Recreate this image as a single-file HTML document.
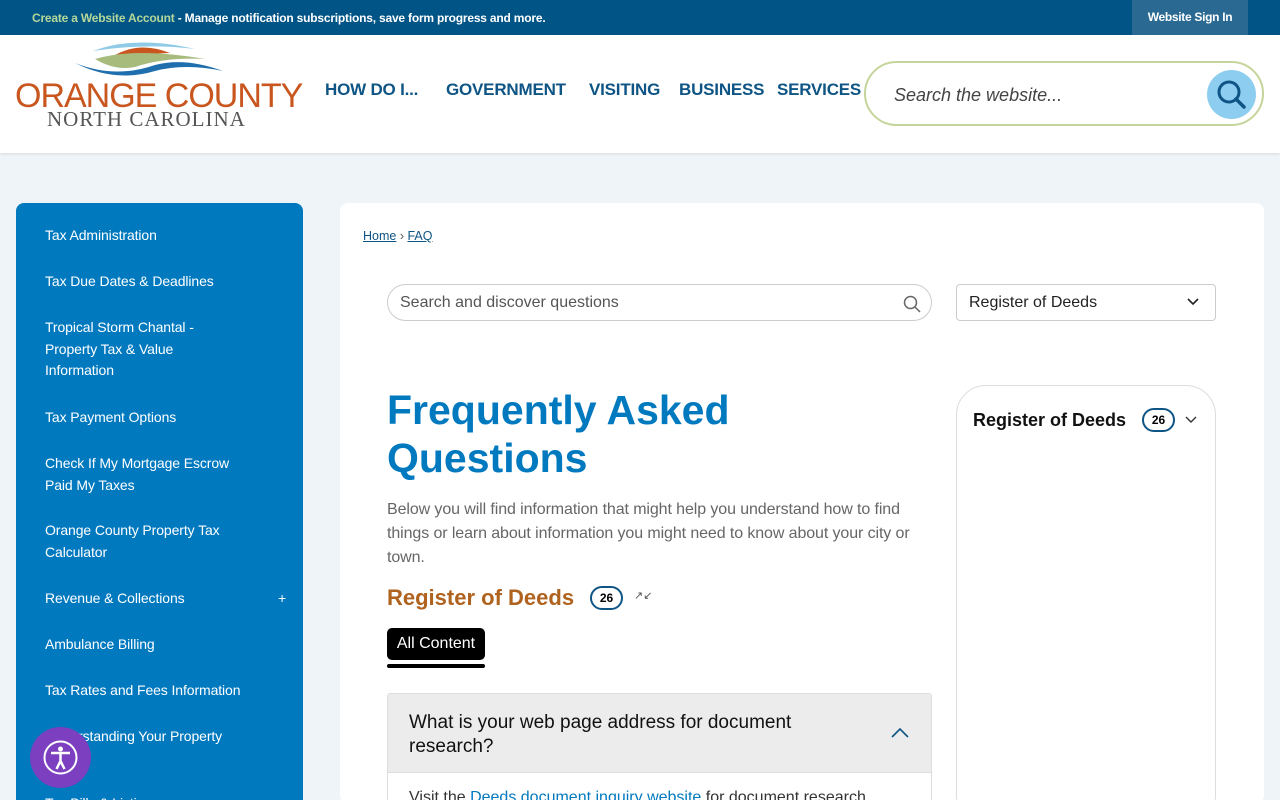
<!DOCTYPE html>
<html><head><meta charset="utf-8"><style>
*{box-sizing:border-box;margin:0;padding:0}
html,body{width:1280px;height:800px;overflow:hidden}
body{background:#eef4f7;font-family:"Liberation Sans",sans-serif;position:relative}
.top{position:absolute;left:0;top:0;width:1280px;height:35px;background:#005586;color:#fff;font-size:12px;font-weight:bold}
.top .msg{position:absolute;left:32px;top:11px;letter-spacing:-0.2px}
.top .msg b{color:#b5d89a}
.top .sign{position:absolute;left:1132px;top:0;width:116px;height:35px;background:#2a6a92;text-align:center;line-height:35px;letter-spacing:-0.3px}
.head{position:absolute;left:0;top:35px;width:1280px;height:118px;background:#fff;box-shadow:0 1px 3px rgba(0,0,0,.1)}
.nav{position:absolute;top:80px;font-size:17px;font-weight:bold;color:#0e5585;letter-spacing:-0.2px}
.search{position:absolute;left:864px;top:61px;width:400px;height:65px;border:2px solid #c4d49a;border-radius:33px;background:#fff}
.search span{position:absolute;left:28px;top:22px;font-style:italic;font-size:18px;color:#444}
.search .btn{position:absolute;left:341px;top:7px;width:49px;height:49px;border-radius:50%;background:#8dcdf0}
.side{position:absolute;left:16px;top:203px;width:287px;height:600px;background:#0079bf;border-radius:8px 8px 0 0;color:#fff;font-size:14px;letter-spacing:-0.1px}
.side div{position:absolute;left:29px;line-height:21.5px;width:200px}
.main{position:absolute;left:340px;top:203px;width:924px;height:600px;background:#fff;border-radius:8px}
a{color:#0e5585}
</style></head><body>
<div class="top"><div class="msg"><b>Create a Website Account</b> - Manage notification subscriptions, save form progress and more.</div><div class="sign">Website Sign In</div></div>
<div class="head">
<svg style="position:absolute;left:75px;top:6px" width="150" height="40" viewBox="0 0 150 40">
<path d="M18 10 Q60 -6 120 8 Q70 2 18 10Z" fill="#8fcbe6"/>
<path d="M40 14 Q65 0 95 12Z" fill="#c8561e"/>
<path d="M20 18 Q60 6 130 18 Q90 16 60 26 Q40 30 20 18Z" fill="#a7bb7d"/>
<path d="M0 22 Q40 38 80 24 Q110 16 148 30 Q110 22 80 30 Q40 42 0 22Z" fill="#1f6fae"/>
</svg>
<div style="position:absolute;left:15px;top:42px;font-size:34px;color:#c8561e;letter-spacing:-1px">ORANGE COUNTY</div>
<div style="position:absolute;left:47px;top:72px;font-size:21px;color:#555;font-family:'Liberation Serif',serif;letter-spacing:1px">NORTH CAROLINA</div>
</div>
<div class="nav" style="left:325px">HOW DO I...</div>
<div class="nav" style="left:446px">GOVERNMENT</div>
<div class="nav" style="left:589px">VISITING</div>
<div class="nav" style="left:679px">BUSINESS</div>
<div class="nav" style="left:777px">SERVICES</div>
<div class="search"><span>Search the website...</span><div class="btn"><svg width="49" height="49" viewBox="0 0 49 49"><circle cx="22" cy="22" r="10" fill="none" stroke="#0e5585" stroke-width="3"/><path d="M29 29l8 8" stroke="#0e5585" stroke-width="3.5" stroke-linecap="round"/></svg></div></div>
<div class="side">
<div style="top:22px">Tax Administration</div>
<div style="top:68px">Tax Due Dates &amp; Deadlines</div>
<div style="top:114px">Tropical Storm Chantal - Property Tax &amp; Value Information</div>
<div style="top:204px">Tax Payment Options</div>
<div style="top:250px">Check If My Mortgage Escrow Paid My Taxes</div>
<div style="top:317px">Orange County Property Tax Calculator</div>
<div style="top:385px">Revenue &amp; Collections</div>
<div style="top:385px;left:262px">+</div>
<div style="top:431px">Ambulance Billing</div>
<div style="top:477px;width:230px">Tax Rates and Fees Information</div>
<div style="top:523px">Understanding Your Property Tax Bill</div>
<div style="top:590px">Tax Bills &amp; Listings</div>
</div>
<div style="position:absolute;left:30px;top:727px;width:61px;height:61px;border-radius:50%;background:#7b3fbf"><svg width="61" height="61" viewBox="0 0 61 61"><circle cx="30.5" cy="30.5" r="16" fill="none" stroke="#fff" stroke-width="2"/><circle cx="30.5" cy="22" r="2.5" fill="#fff"/><path d="M21 26h19M30.5 26v8l-4 8M30.5 34l4 8" stroke="#fff" stroke-width="2.5" fill="none"/></svg></div>
<div class="main">
<div style="position:absolute;left:23px;top:26px;font-size:12.5px"><a style="text-decoration:underline">Home</a> <span style="color:#555">›</span> <a style="text-decoration:underline">FAQ</a></div>
<div style="position:absolute;left:47px;top:81px;width:545px;height:37px;border:1px solid #ccc;border-radius:19px;font-size:16px;color:#555;padding:9px 12px">Search and discover questions
<svg style="position:absolute;right:10px;top:10px" width="18" height="18" viewBox="0 0 18 18"><circle cx="7.5" cy="7.5" r="6" fill="none" stroke="#666" stroke-width="1.5"/><path d="M12 12l5 5" stroke="#666" stroke-width="1.5"/></svg></div>
<div style="position:absolute;left:616px;top:81px;width:260px;height:37px;border:1px solid #ccc;border-radius:4px;font-size:16px;color:#222;padding:9px 12px">Register of Deeds<svg style="position:absolute;right:16px;top:13px" width="12" height="8" viewBox="0 0 12 8"><path d="M1 1l5 5 5-5" stroke="#222" stroke-width="1.6" fill="none"/></svg></div>
<div style="position:absolute;left:47px;top:183px;font-size:41px;font-weight:bold;color:#0079bf;line-height:48px">Frequently Asked<br>Questions</div>
<div style="position:absolute;left:47px;top:295px;width:528px;font-size:16px;line-height:24px;color:#666;letter-spacing:-0.1px">Below you will find information that might help you understand how to find things or learn about information you might need to know about your city or town.</div>
<div style="position:absolute;left:47px;top:382px;font-size:22px;font-weight:bold;color:#b0621f">Register of Deeds</div>
<div style="position:absolute;left:250px;top:383px;width:33px;height:24px;border:2px solid #0e5585;border-radius:12px;font-size:12px;font-weight:bold;text-align:center;line-height:20px">26</div>
<div style="position:absolute;left:294px;top:386px;font-size:11px;color:#555">↗↙</div>
<div style="position:absolute;left:47px;top:425px;width:98px;height:32px;background:#000;color:#fff;border-radius:5px;font-size:16px;text-align:center;line-height:32px">All Content</div>
<div style="position:absolute;left:47px;top:461px;width:98px;height:4px;background:#000;border-radius:2px"></div>
<div style="position:absolute;left:47px;top:490px;width:545px;height:140px;border:1px solid #ddd;border-radius:3px">
<div style="height:79px;background:#ececec;border-bottom:1px solid #ddd;padding:17px 21px;font-size:19px;line-height:24px;color:#111;position:relative">What is your web page address for document<br>research?<svg style="position:absolute;right:22px;top:34px" width="18" height="10" viewBox="0 0 18 10"><path d="M1 9l8-8 8 8" stroke="#0e5585" stroke-width="1.6" fill="none"/></svg></div>
<div style="padding:16px 21px;font-size:16px;color:#333">Visit the <span style="color:#0079bf;text-decoration:underline">Deeds document inquiry website</span> for document research</div>
</div>
<div style="position:absolute;left:616px;top:182px;width:260px;height:440px;border:1px solid #ddd;border-radius:30px">
<div style="position:absolute;left:16px;top:24px;font-size:18px;font-weight:bold;color:#111">Register of Deeds</div>
<div style="position:absolute;left:185px;top:22px;width:33px;height:24px;border:2px solid #0e5585;border-radius:12px;font-size:12px;font-weight:bold;text-align:center;line-height:20px">26</div>
<svg style="position:absolute;left:228px;top:30px" width="12" height="8" viewBox="0 0 12 8"><path d="M1 1l5 5 5-5" stroke="#333" stroke-width="1.4" fill="none"/></svg>
</div>
</div>
</body></html>
